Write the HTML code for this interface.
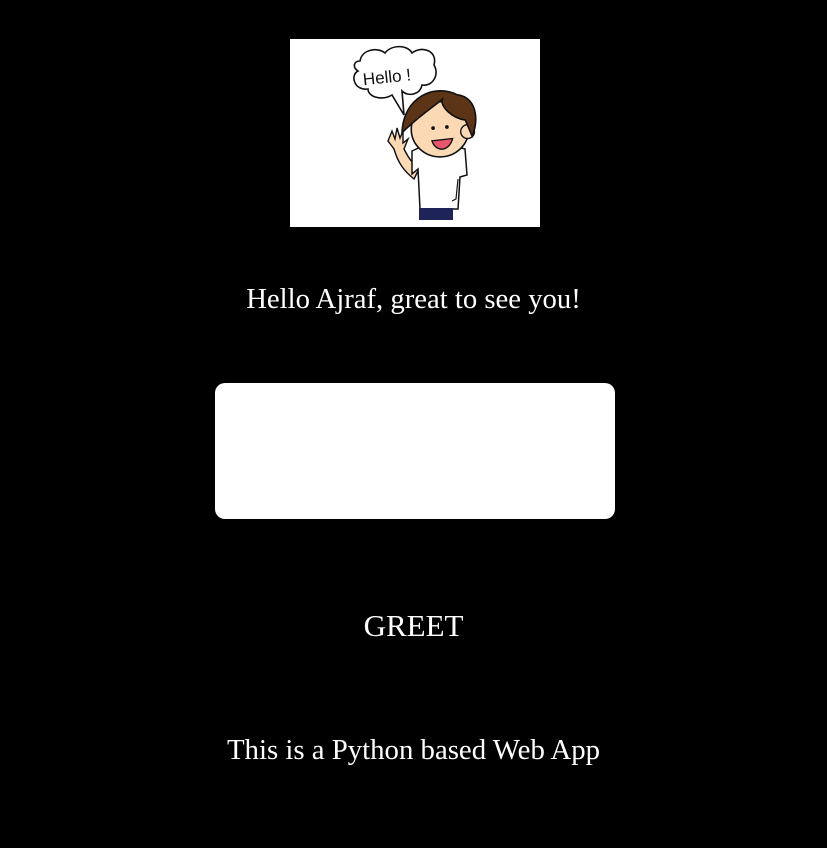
<!DOCTYPE html>
<html><head><style>
body{margin:0;background:#000;width:827px;height:848px;position:relative;font-family:"Liberation Serif",serif;color:#fff;overflow:hidden}
.t{position:absolute;left:0;width:827px;text-align:center;white-space:nowrap}
</style></head><body>
<svg style="position:absolute;left:290px;top:39px" width="250" height="188" viewBox="0 0 250 188">
<rect width="250" height="188" fill="#fff"/>
<path d="M70,22 C72,10 88,8 95,14 C102,5 118,6 122,14 C132,6 148,12 144,26 C150,36 142,48 132,46 C130,56 118,58 112,52 L114,76 L102,56 C92,62 78,58 78,50 C64,52 60,36 68,32 C62,28 64,22 70,22Z" fill="#fff" stroke="#111" stroke-width="1.6"/>
<text x="73" y="44" font-family="Liberation Sans,sans-serif" font-size="17" fill="#111" transform="rotate(-6 95 40)">Hello !</text>
<path d="M98,102 L102,92 L105,100 L107,89 L110,99 L113,92 L113,104 L118,100 L114,110 C120,122 124,126 130,128 L124,140 C114,132 108,124 104,110 Z" fill="#fbd9b5" stroke="#111" stroke-width="1.4"/>
<path d="M122,112 L135,106 L160,106 L175,110 L177,136 L170,138 L168,170 L130,170 L128,130 L122,135 Z" fill="#fff" stroke="#111" stroke-width="1.5"/>
<path d="M168,140 L166,160 L162,162" fill="none" stroke="#111" stroke-width="1.2"/>
<rect x="129" y="169" width="34" height="12" fill="#1e2358"/>
<g transform="translate(150,88) scale(1.15) translate(-150,-88)">
<ellipse cx="150" cy="90" rx="25" ry="24" fill="#fbd9b5" stroke="#111" stroke-width="1.4"/>
<circle cx="174" cy="92" r="6" fill="#fbd9b5" stroke="#111" stroke-width="1.2"/>
<path d="M117,93 C118,62 145,50 165,60 C182,62 184,82 178,96 L172,82 C160,80 150,70 152,64 C142,72 130,80 117,93Z" fill="#5c3416" stroke="#111" stroke-width="1.4"/>
<circle cx="144" cy="89" r="1.6" fill="#111"/><circle cx="156" cy="88" r="1.6" fill="#111"/>
<path d="M143,100 C146,110 158,110 161,98 Z" fill="#e4566c" stroke="#111" stroke-width="1.2"/>
</g>
</svg>
<div class="t" style="top:283px;font-size:28.7px">Hello Ajraf, great to see you!</div>
<div style="position:absolute;left:215px;top:383px;width:400px;height:136px;background:#fff;border-radius:10px"></div>
<div class="t" style="top:608px;font-size:31px">GREET</div>
<div class="t" style="top:734px;font-size:28.8px">This is a Python based Web App</div>
</body></html>
